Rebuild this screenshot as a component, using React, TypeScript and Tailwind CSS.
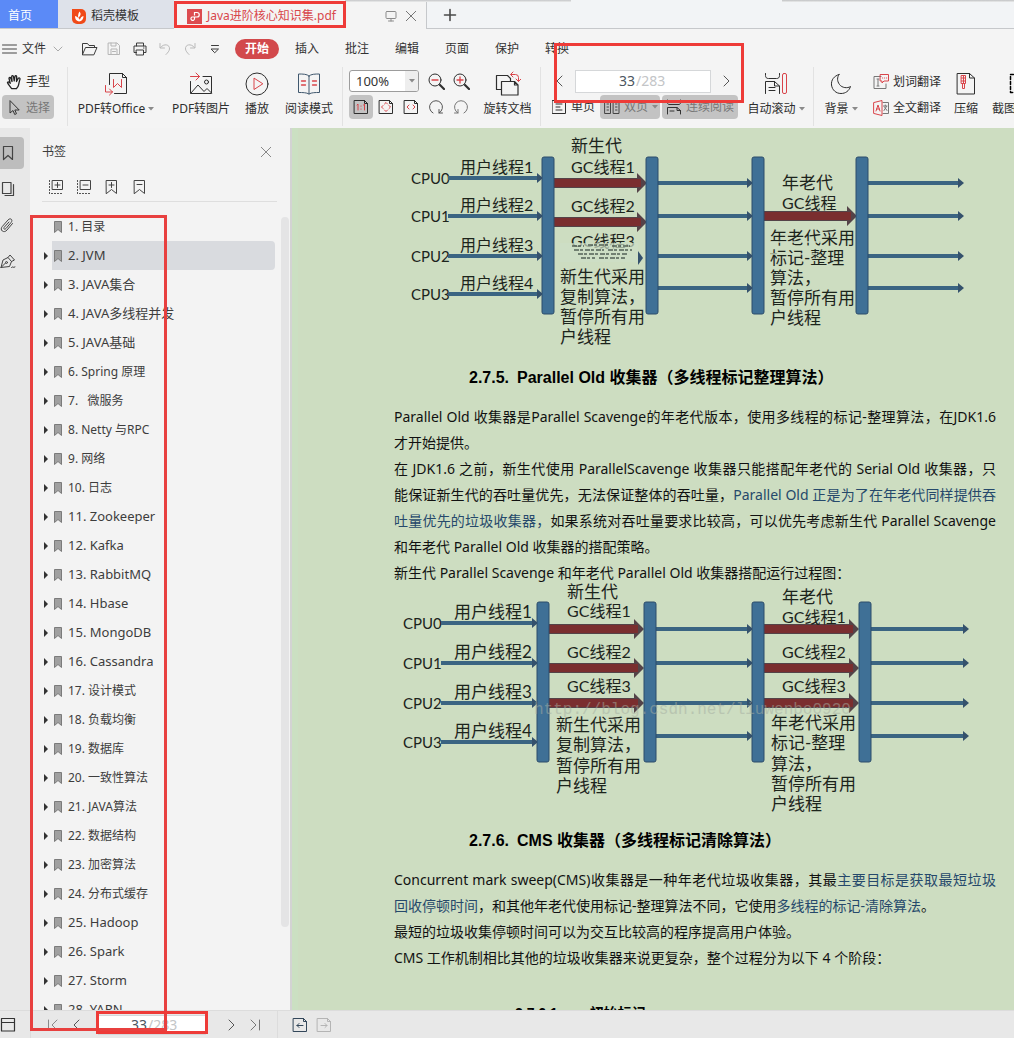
import React from "react";
import type { ReactNode } from "react";

const RED = "#d9444a";

function Svg({ w = 16, h = 16, className = "", children }: { w?: number; h?: number; className?: string; children: ReactNode }) {
  return (
    <svg
      width={w}
      height={h}
      viewBox={`0 0 ${w} ${h}`}
      fill="none"
      stroke="currentColor"
      strokeLinecap="round"
      strokeLinejoin="round"
      className={`shrink-0 ${className}`}
      aria-hidden="true"
    >
      {children}
    </svg>
  );
}

const ChevronLeft = ({ bar = false }: { bar?: boolean }) => (
  <Svg w={14} h={14}>
    <path d="M10 2 5 7l5 5" />
    {bar && <path d="M1.5 2v10" />}
  </Svg>
);
const ChevronRight = ({ bar = false }: { bar?: boolean }) => (
  <Svg w={14} h={14}>
    <path d="m4 2 5 5-5 5" />
    {bar && <path d="M12.500 2v10" />}
  </Svg>
);
const Close = ({ size = 12 }: { size?: number }) => (
  <svg width={size} height={size} viewBox="0 0 12 12" fill="none" stroke="currentColor" aria-hidden="true">
    <path d="m1 1 10 10M11 1 1 11" />
  </svg>
);
const Caret = () => (
  <svg width="6" height="4" viewBox="0 0 6 4" className="shrink-0" aria-hidden="true">
    <path d="M0 0h6L3 3.500z" fill="#8a8a8a" />
  </svg>
);

/* ---------- Title tabs ---------- */

function TitleTabs() {
  return (
    <div className="relative flex h-[29px] shrink-0 border-b border-[#c6c8cb] bg-[#f2f4f6]">
      <button className="h-7 w-[58px] bg-[#5b8af7] pt-1 pr-3 pl-2 text-left text-xs text-white">首页</button>
      <button className="flex h-7 w-[116px] items-center gap-[5px] bg-[#dee2ea] pt-1 pl-[14px] text-xs text-[#333]">
        <svg width="14" height="15" viewBox="0 0 14 15" aria-hidden="true">
          <path d="M0 0h9a5 5 0 0 1 5 5v5a5 5 0 0 1-5 5H5a5 5 0 0 1-5-5z" fill="#f04a18" />
          <path d="M7.500 2.500c2 2.500 1 4-1 6.500-.8-1.500-.5-4 1-6.500zM3 7c0 3 1 5 4 5.500 3-.3 4.500-2.500 4.500-5.500-2 .4-3 2-3.700 3.700C7 9 5 7.500 3 7z" fill="#fff" />
        </svg>
        稻壳模板
      </button>
      <div className="flex h-[29px] w-[253px] items-center border-r border-[#c6c8cb] bg-[#f4f4f4] pt-[3px] pl-[13px] text-xs text-[#d8474c]">
        <svg width="15" height="15" viewBox="0 0 15 15" fill="none" aria-hidden="true">
          <rect width="15" height="15" fill="#dc4c50" />
          <path d="M7.500 6.500v-3h2.500a2 2 0 0 1 0 4.500H5a1.800 1.800 0 1 0 2.500 2V8" stroke="#fff" strokeWidth="1.200" />
        </svg>
        <span className="ml-[5px] w-[173px] whitespace-nowrap">Java进阶核心知识集.pdf</span>
        <Svg w={12} h={12} className="ml-[5px] text-[#8b8b8b]">
          <rect x="1" y="1.500" width="10" height="7" rx="1" />
          <path d="M6 8.500v2.500M3.500 11h5" />
        </Svg>
        <button aria-label="关闭标签" className="ml-2 text-[#777]">
          <Close size={12} />
        </button>
      </div>
      <button aria-label="新建标签" className="ml-4 pt-[2px] text-[#4a4a4a]">
        <Svg w={14} h={14}>
          <path d="M7 1.500v11M1.500 7h11" strokeWidth="1.600" />
        </Svg>
      </button>
      <span className="absolute top-0 right-0 h-[2px] w-[232px] bg-gradient-to-b from-[#bfc0c2] to-[#eceded]" />
      <span className="absolute top-0 left-[345px] h-[2px] w-[226px] bg-gradient-to-b from-[#c4c5c7] to-[#eceded]" />
    </div>
  );
}

/* ---------- Menu row ---------- */

function MenuRow() {
  const tabs = ["插入", "批注", "编辑", "页面", "保护", "转换"];
  return (
    <nav className="flex h-[38px] shrink-0 items-center pt-px pl-[2px] text-xs text-[#333]">
      <button className="flex items-center">
        <Svg w={15} h={12} className="mr-[5px] text-[#444]">
          <path d="M.5 2h14M.5 6h14M.5 10h14" />
        </Svg>
        文件
        <Svg w={10} h={6} className="ml-[7px] text-[#aaa]">
          <path d="m1 1 4 4 4-4" />
        </Svg>
      </button>
      <div className="ml-[18px] flex items-center gap-[9px] text-[#3c3c3c]">
        <button aria-label="打开">
          <Svg w={17} h={16}>
            <path d="M1.500 13.500v-11h5l1.500 2h5.500v2M1.500 13.500l3-7h11.500l-3 7z" />
          </Svg>
        </button>
        <button aria-label="保存" className="text-[#b5b5b5]">
          <Svg w={14} h={16}>
            <path d="M1.500 2h8.500l2.500 2.500V13.500h-11zM4 2v3h5V2M4 13.500V8h6v5.500M5.500 10.500h3" />
          </Svg>
        </button>
        <button aria-label="打印" className="ml-[3px]">
          <Svg w={14} h={16}>
            <path d="M3.500 5V2h7v3M3.500 11.500h-2.500V5h12v6.500h-2.500M3.500 9h7v5h-7zM10.500 7h.5" />
          </Svg>
        </button>
        <button aria-label="撤销" className="ml-[2px] text-[#b9b9b9]">
          <Svg w={14} h={16}>
            <path d="M2 2.500v4.500h4.500M2.500 6.500C6 2 12 3.500 11.500 8c-.3 2-1.500 3.500-3.500 5.500" />
          </Svg>
        </button>
        <button aria-label="恢复" className="ml-[2px] text-[#b9b9b9]">
          <Svg w={14} h={16}>
            <path d="M12 2.500v4.500H7.500M11.500 6.500C8 2 2 3.500 2.500 8c.3 2 1.500 3.500 3.500 5.500" />
          </Svg>
        </button>
        <button aria-label="更多命令" className="ml-1">
          <Svg w={10} h={14}>
            <path d="M1.500 3.500h7M1.500 7h7L5 10.500z" />
          </Svg>
        </button>
      </div>
      <button className="ml-[15px] h-5 w-11 rounded-full bg-[#d2494c] font-bold text-white">开始</button>
      <div className="ml-4 flex gap-[26px]">
        {tabs.map((t) => (
          <button key={t} className="whitespace-nowrap">{t}</button>
        ))}
      </div>
    </nav>
  );
}

/* ---------- Ribbon ---------- */

function Tool({ label, width, caret = false, children }: { label: string; width: string; caret?: boolean; children: ReactNode }) {
  return (
    <button className={`flex shrink-0 flex-col items-center gap-1 whitespace-nowrap pt-1 ${width}`}>
      <span className="flex h-[26px] items-center">{children}</span>
      <span className="flex items-center gap-[3px] leading-4">
        {label}
        {caret && <Caret />}
      </span>
    </button>
  );
}

function PageBox({ className, id }: { className: string; id: string }) {
  return (
    <div className={`flex items-center border border-[#d5d7d9] bg-white text-sm ${className}`}>
      <label htmlFor={id} className="sr-only">页码</label>
      <input id={id} defaultValue="33" className="w-1/2 min-w-0 bg-transparent pr-px text-right text-[#4b5560] outline-none" />
      <span className="w-1/2 text-[#c3c5c7]">/283</span>
    </div>
  );
}

function Ribbon() {
  return (
    <div className="flex h-[61px] shrink-0 overflow-hidden pb-[2px] text-xs text-[#2e2e2e]">
      <div className="flex w-[67px] shrink-0 flex-col gap-[2px] pt-[2px] pl-[2px]">
        <button className="flex h-6 items-center gap-1 px-1 pt-px">
          <Svg w={16} h={18} className="text-[#222]">
            <path
              d="M5.500 15.500C4 13 2 11.500 1.500 9.500c.8-1 2-.3 2.800.8L3 5.500c0-1.300 1.500-1.300 1.800-.2L6 8.500 5.700 3.500c.2-1.300 1.600-1.200 1.800 0L8.200 8 9 3.500c.3-1.200 1.600-1 1.700.2L10.500 8.500l1.800-3.200c.8-.9 1.900-.2 1.700.8-.7 2-1 4-1.500 6-.3 1.500-1.300 2.500-2 3.500z"
              strokeWidth="1.300"
            />
          </Svg>
          手型
        </button>
        <button className="flex h-6 w-[52px] items-center gap-1 rounded bg-[#c3c3c3] px-1 pt-px text-[#777]">
          <Svg w={16} h={18} className="text-[#333]">
            <path d="M4 2v12l3-2.500 1.700 4 1.800-.8-1.700-3.700h4z" />
          </Svg>
          选择
        </button>
      </div>
      <div className="flex shrink-0 border-x border-[#e2e2e2]">
        <Tool label="PDF转Office" width="w-[96px]" caret>
          <Svg w={24} h={24}>
            <path d="M5.500 12.500V1.500h13l4 4v16h-12M18.500 1.500v4h4" />
            <path d="M9.500 7.500v8l4-4 4 4v-8M1.500 13.500v6.500h7M5.500 17l3 3-3 3" stroke={RED} />
          </Svg>
        </Tool>
        <Tool label="PDF转图片" width="w-[74px]">
          <Svg w={24} h={24}>
            <path d="M14 4.500h8.500v17h-21v-12M2 21l7-8 6 6.500 3-3 4.500 4.500" />
            <circle cx="17.500" cy="10" r="2" />
            <path d="M1.500 4.500h9M7 1l3.500 3.500L7 8" stroke={RED} />
          </Svg>
        </Tool>
        <Tool label="播放" width="w-[38px]">
          <Svg w={24} h={24}>
            <circle cx="12" cy="12" r="11" />
            <path d="M9 6.500v11l8.500-5.500z" stroke={RED} />
          </Svg>
        </Tool>
        <Tool label="阅读模式" width="w-[66px]">
          <Svg w={24} h={24} className="text-[#40586e]">
            <path d="M12 4C10 2 6 2 1.500 2v18.500c4 0 8 0 10.500 1.500 2.500-1.500 6.500-1.500 10.500-1.500V2C18 2 14 2 12 4zM12 4v18" />
            <path d="M4.500 9h4M4.500 13h4M15.500 9h4M15.500 13h4" stroke={RED} strokeWidth="1.300" />
          </Svg>
        </Tool>
      </div>
      <div className="flex w-[132px] shrink-0 flex-col gap-[2px] pt-[2px] pl-[6px]">
        <div className="flex h-6 items-center">
          <div className="relative h-[22px] w-[70px]">
            <select
              aria-label="缩放比例"
              className="h-[22px] w-full appearance-none rounded-[3px] border border-[#9c9c9c] bg-white pl-[6px] text-[13px] leading-5 text-[#333]"
            >
              <option>100%</option>
            </select>
            <span className="pointer-events-none absolute top-px right-px flex h-5 w-[13px] items-center justify-center rounded-r-[2px] bg-[#eee]">
              <Caret />
            </span>
          </div>
          <button aria-label="缩小" className="ml-2">
            <Svg w={18} h={18}>
              <circle cx="8" cy="8" r="6" />
              <path d="m13 13 4 4" strokeWidth="2.200" />
              <path d="M5 8h6" stroke={RED} strokeWidth="1.300" />
            </Svg>
          </button>
          <button aria-label="放大" className="ml-[7px]">
            <Svg w={18} h={18}>
              <circle cx="8" cy="8" r="6" />
              <path d="m13 13 4 4" strokeWidth="2.200" />
              <path d="M5 8h6M8 5v6" stroke={RED} strokeWidth="1.300" />
            </Svg>
          </button>
        </div>
        <div className="flex h-6 items-center">
          <button aria-label="实际大小" className="flex h-6 w-6 items-center justify-center rounded bg-[#c3c3c3]">
            <Svg w={16} h={16}>
              <path d="M1.500 1.500h10l3 3v10h-13zM11.500 1.500v3h3" />
              <path d="M4 6l1-1v6M10.500 6l1-1v6M8 7v.2M8 10v.2" stroke={RED} />
            </Svg>
          </button>
          <button aria-label="适合页面" className="ml-[5px]">
            <Svg w={16} h={16}>
              <path d="M1.500 1.500h10l3 3v10h-13zM11.500 1.500v3h3" />
              <path d="m6.500 5 1.500-1.500L9.500 5M6.500 11 8 12.500 9.500 11M5 6.500 3.500 8 5 9.500M11 6.500 12.500 8 11 9.500" stroke={RED} />
            </Svg>
          </button>
          <button aria-label="适合宽度" className="ml-[9px]">
            <Svg w={16} h={16}>
              <path d="M1.500 1.500h10l3 3v10h-13zM11.500 1.500v3h3" />
              <path d="M6 6 4 8l2 2M10 6l2 2-2 2" stroke={RED} />
            </Svg>
          </button>
          <button aria-label="向左旋转" className="ml-[9px] text-[#555]">
            <Svg w={16} h={16}>
              <path d="M5 14A6.500 6.500 0 1 1 11 14M11 10.500V14h3.500" />
            </Svg>
          </button>
          <button aria-label="向右旋转" className="ml-[9px] text-[#777]">
            <Svg w={16} h={16}>
              <path d="M11 14A6.500 6.500 0 1 0 5 14M5 10.500V14H1.500" />
            </Svg>
          </button>
        </div>
      </div>
      <Tool label="旋转文档" width="w-[65px]">
        <Svg w={26} h={26}>
          <path d="M6 18.500H1.500V4.500h11l3 3v2.500M6.500 10.500h13l3.500 3.500v10H6.500zM19.500 10.500v3.500H23" strokeWidth="1.200" />
          <path d="M16 3.500h4.500a3 3 0 0 1 3 3v3.500M18 1l-2.500 2.500L18 6M21 8l2.500 2.500L26 8" stroke={RED} />
        </Svg>
      </Tool>
      <div className="flex w-[199px] shrink-0 flex-col gap-[2px] border-l border-[#e2e2e2] pt-[2px] pl-[11px]">
        <div className="flex h-6 items-center text-[#555]">
          <button aria-label="上一页"><ChevronLeft /></button>
          <PageBox id="page-top" className="ml-[9px] h-[23px] w-[136px] pr-[14px]" />
          <button aria-label="下一页" className="ml-[9px]"><ChevronRight /></button>
        </div>
        <div className="flex h-6 items-center gap-[2px] whitespace-nowrap">
          <button className="flex items-center gap-[5px] pr-[3px]">
            <Svg w={14} h={16}>
              <path d="M.5 1.500h13v13H.5zM4 5h6M4 8h4M4 11h6" />
            </Svg>
            单页
          </button>
          <button className="flex h-6 w-[60px] items-center gap-1 rounded bg-[#c3c3c3] pl-1 text-[#777]">
            <Svg w={16} h={16} className="text-[#444]">
              <path d="M1 1.500h5.500v13H1zM9.500 1.500H15v13H9.500zM3 5h1.500M3 8h1.500M3 11h1.500M11.500 5H13M11.500 8H13M11.500 11H13" />
            </Svg>
            双页
            <Caret />
          </button>
          <button className="flex h-6 w-[76px] items-center gap-1 rounded bg-[#c3c3c3] pl-1 text-[#777]">
            <Svg w={16} h={16} className="text-[#333]">
              <path d="M1.500 1v2.500c0 1 .5 2 1.500 2h10c1 0 1.500-1 1.500-2V1M1.500 15V8.500H11l3.500 3V15M11 8.500v3h3.500M4 12h4" />
            </Svg>
            连续阅读
          </button>
        </div>
      </div>
      <Tool label="自动滚动" width="w-[74px]" caret>
        <Svg w={24} h={24}>
          <path d="M1.500 1.500v2c0 2 1 3 3 3h8c2 0 3-1 3-3v-2M1.500 21.500v-12h9l5 4.500v7.500M10.500 9.500V14h5M5 15.500h6M5 18.500h6" />
          <rect x="18.500" y="1.500" width="4" height="20" rx="1.500" stroke={RED} />
        </Svg>
      </Tool>
      <div className="flex min-w-0 flex-1 border-l border-[#e2e2e2]">
        <Tool label="背景" width="w-[54px]" caret>
          <Svg w={22} h={22}>
            <path d="M9 1.500C4 3 1 7 1.500 12c.7 5 4.500 8.500 9.500 8.500 4.500 0 8-2.500 9.500-7-3 2-8.500 1.500-11-2C7 8 7 4.500 9 1.500z" />
          </Svg>
        </Tool>
        <div className="flex w-[78px] shrink-0 flex-col gap-[2px] pt-[2px] pl-[5px] whitespace-nowrap">
          <button className="flex h-6 items-center gap-1 pt-px">
            <Svg w={16} h={16}>
              <path d="M8 2.500H1v12h12V10M5 5.500v6M4 5h2M4 12h2" stroke="#777" />
              <path d="M7.500.5h8v6.500H11L9 9V7H7.500zM9.500 4h.2M11.500 4h.2M13.500 4h.2" stroke={RED} />
            </Svg>
            划词翻译
          </button>
          <button className="flex h-6 items-center gap-1 pt-px">
            <Svg w={16} h={16}>
              <path d="M10 2.500h5.500v11H10M10.500 6H14M12.300 5v1M11 10.500l2.500-4M11.500 7l2.500 3.500" stroke="#777" />
              <path d="M1 2.500 9 .5v15L1 13.500zM3 11l2-6 2 6M3.700 9h2.600" stroke={RED} />
            </Svg>
            全文翻译
          </button>
        </div>
        <Tool label="压缩" width="w-[40px]">
          <Svg w={20} h={24}>
            <path d="M1.500 1.500h12l5 4.500v16h-17zM13.500 1.500V6h5" />
            <path d="M5.500 3.500h4v8h-4zM7.500 3.500v8M5.500 6h4M5.500 9h4M6.500 11.500v5h2v-5" stroke={RED} />
          </Svg>
        </Tool>
        <Tool label="截图对比" width="w-[60px]">
          <Svg w={14} h={24} className="text-black">
            <rect x="1.500" y="2.500" width="17" height="18" strokeWidth="1.500" strokeDasharray="3 2" />
          </Svg>
        </Tool>
      </div>
    </div>
  );
}

/* ---------- Bookmark panel ---------- */

const bookmarks: { no: number; name: string; large?: boolean }[] = [
  { no: 1, name: "目录" },
  { no: 2, name: "JVM", large: true },
  { no: 3, name: "JAVA集合", large: true },
  { no: 4, name: "JAVA多线程并发", large: true },
  { no: 5, name: "JAVA基础", large: true },
  { no: 6, name: "Spring 原理" },
  { no: 7, name: "\u00a0 微服务" },
  { no: 8, name: "Netty 与RPC" },
  { no: 9, name: "网络" },
  { no: 10, name: "日志" },
  { no: 11, name: "Zookeeper", large: true },
  { no: 12, name: "Kafka", large: true },
  { no: 13, name: "RabbitMQ", large: true },
  { no: 14, name: "Hbase", large: true },
  { no: 15, name: "MongoDB", large: true },
  { no: 16, name: "Cassandra", large: true },
  { no: 17, name: "设计模式" },
  { no: 18, name: "负载均衡" },
  { no: 19, name: "数据库" },
  { no: 20, name: "一致性算法" },
  { no: 21, name: "JAVA算法" },
  { no: 22, name: "数据结构" },
  { no: 23, name: "加密算法" },
  { no: 24, name: "分布式缓存" },
  { no: 25, name: "Hadoop", large: true },
  { no: 26, name: "Spark", large: true },
  { no: 27, name: "Storm", large: true },
  { no: 28, name: "YARN", large: true },
];

function Rail() {
  return (
    <div className="flex w-[30px] shrink-0 flex-col bg-[#e8e8e8] pt-[9px] text-[#444]">
      <button aria-label="书签" className="flex h-8 w-6 items-center rounded-r bg-[#bdbdbd] pl-[2px]">
        <Svg w={12} h={16}>
          <path d="M1.500 1.500h9v13L6 10.500l-4.500 4z" strokeWidth="1.200" />
        </Svg>
      </button>
      <button aria-label="缩略图" className="mt-[2px] flex h-9 items-center pl-[1px]">
        <Svg w={14} h={16}>
          <path d="M1.500 1.500h8.500v11H1.500zM12.500 3.500v11H4" strokeWidth="1.200" />
        </Svg>
      </button>
      <button aria-label="附件" className="flex h-9 items-center">
        <Svg w={14} h={16}>
          <path d="M12.500 6.500 7 13c-1.500 1.800-3.300 2-4.700 1-1.500-1.200-1.300-3 0-4.500L8 3c2.300-2.600 5.200-.3 3.200 2.300L6 11.500c-1.500 1.500-3 .2-1.700-1.300L9 5" />
        </Svg>
      </button>
      <button aria-label="签名" className="flex h-9 items-center">
        <Svg w={16} h={16}>
          <path d="M1 14.500 3 7l5-2.500 3.500 4-2 5-8.500 1M8 4.500 10 2l4.500 5-3 1.500M1.500 14l4-4M11.500 14.500c1-2 1.500 1 3.500-.5" />
          <circle cx="6.500" cy="9.500" r="1" />
        </Svg>
      </button>
    </div>
  );
}

function BookmarkPanel() {
  return (
    <aside className="flex w-[262px] shrink-0 flex-col border-r-2 border-[#d3d3d3] bg-[#f3f3f3] text-xs text-[#3d3d3d]">
      <div className="flex h-12 shrink-0 items-center justify-between pr-[18px] pl-3">
        <h2>书签</h2>
        <button aria-label="关闭书签" className="text-[#888]"><Close size={12} /></button>
      </div>
      <div className="mr-[13px] ml-3 flex h-[26px] shrink-0 items-start gap-3 border-b border-[#dedede] pt-[3px] pl-[6px] text-[#444]">
        <button aria-label="展开全部">
          <Svg w={16} h={16}>
            <path d="M4.500 1.500h10v9h-10zM7 6h5M9.500 3.500v5" />
            <path d="M1.500 1.500v13M3.500 14.500h10" strokeDasharray="1 2" />
          </Svg>
        </button>
        <button aria-label="折叠全部">
          <Svg w={16} h={16}>
            <path d="M4.500 1.500h10v9h-10zM7 6h5" />
            <path d="M1.500 1.500v13M3.500 14.500h10" strokeDasharray="1 2" />
          </Svg>
        </button>
        <button aria-label="添加书签">
          <Svg w={16} h={16}>
            <path d="M2.500 1.500h10v13l-5-4-5 4zM5 6h5M7.500 3.500v5" />
          </Svg>
        </button>
        <button aria-label="删除书签">
          <Svg w={16} h={16}>
            <path d="M2.500 1.500h10v13l-5-4-5 4zM5 5.500h5" />
          </Svg>
        </button>
      </div>
      <div className="flex min-h-0 flex-1 overflow-hidden">
        <ul className="flex-1 pt-[10px] pl-3">
          {bookmarks.map((b) => (
            <li key={b.no} className="flex h-[29px] items-center">
              <span className="flex w-[10px] shrink-0 justify-start">
                {b.no > 1 && (
                  <svg width="6" height="8" viewBox="0 0 6 8" className="ml-px" aria-hidden="true">
                    <path d="M1 0v8l4-4z" fill="#333" />
                  </svg>
                )}
              </span>
              <button
                className={`flex h-[29px] flex-1 items-center rounded-r-sm pl-[2px] text-left whitespace-nowrap ${b.no === 2 ? "bg-[#d9dbdf]" : ""}`}
              >
                <svg width="8" height="12" viewBox="0 0 8 12" className="mr-[6px]" aria-hidden="true">
                  <path d="M.5.5h7v11L4 8.500.5 11.500z" fill="#a0a0a0" stroke="#7b7b7b" />
                </svg>
                <span className={b.large ? "text-[13px]" : "text-xs"}>
                  {b.no}. {b.name}
                </span>
              </button>
            </li>
          ))}
        </ul>
        <div className="ml-[6px] w-[9px] pr-px">
          <div className="mt-[15px] h-[710px] rounded bg-[#e4e4e5]" />
        </div>
      </div>
    </aside>
  );
}

/* ---------- Diagrams ---------- */

const Bar = ({ x, y, h }: { x: number; y: number; h: number }) => (
  <rect x={x} y={y} width="12" height={h} rx="2" fill="#3f7096" stroke="#2c4c6a" />
);
const Thin = ({ x1, x2, y }: { x1: number; x2: number; y: number }) => (
  <g>
    <path d={`M${x1} ${y}H${x2 - 3}`} stroke="#3a6482" strokeWidth="4" />
    <path d={`M${x2 - 5} ${y - 5}v10l6-5z`} fill="#34516c" />
  </g>
);
const Thick = ({ x1, x2, y }: { x1: number; x2: number; y: number }) => (
  <g>
    <path d={`M${x1} ${y - 5}H${x2 - 9}v-5l10 10-10 10v-5H${x1}z`} fill="#544348" />
    <path d={`M${x1} ${y - 4}H${x2 - 5}v8H${x1}z`} fill="#7a2e2f" />
  </g>
);
const Lines = ({ x, ys, lines }: { x: number; ys: number[]; lines: string[] }) => (
  <>
    {lines.map((t, i) => (
      <text key={t} x={x} y={ys[i]} className="text-[17px]">{t}</text>
    ))}
  </>
);

const diagramFont = "block h-auto w-full overflow-visible fill-[#1c241c] font-[Lato,'Noto_Sans_CJK_SC',sans-serif]";

function SerialDiagram() {
  const cpu = [178, 216, 256, 294];
  const flow = [183, 216, 256, 288];
  return (
    <svg viewBox="0 128 602 236" className={diagramFont} role="img" aria-label="新生代与年老代收集线程">
      {cpu.map((y, i) => (
        <g key={y}>
          <text x="17" y={y + 6} className="text-[15px]">CPU{i}</text>
          <Thin x1={54} x2={148} y={y} />
          <text x="66" y={y - 5} className="text-[16px]">用户线程{i + 1}</text>
        </g>
      ))}
      {flow.map((y) => (
        <g key={y}>
          <Thin x1={264} x2={358} y={y} />
          <Thin x1={474} x2={569} y={y} />
        </g>
      ))}
      <text x="177" y="152" className="text-[17px]">新生代</text>
      <text x="177" y="173" className="text-[16px]">GC线程1</text>
      <text x="177" y="212" className="text-[16px]">GC线程2</text>
      <text x="177" y="247" className="text-[16px]">GC线程3</text>
      <Thick x1={160} x2={252} y={183} />
      <Thick x1={160} x2={252} y={222} />
      <rect x="166" y="243" width="78" height="19" fill="#cddec6" opacity=".7" />
      <path
        d="M178 246h12M194 245h20M218 246h18M180 250h30M214 250h24M184 254h50M187 258h14M205 258h26"
        stroke="#35423c"
        strokeWidth="2"
        strokeDasharray="5 1 3 2"
        opacity=".6"
      />
      <path d="M244 251v14l5-7z" fill="#34516c" />
      <text x="388" y="189" className="text-[17px]">年老代</text>
      <text x="388" y="209" className="text-[16px]">GC线程</text>
      <Thick x1={370} x2={462} y={216} />
      <Lines x={166} ys={[283, 303, 323, 343]} lines={["新生代采用", "复制算法，", "暂停所有用", "户线程"]} />
      <Lines x={376} ys={[244, 264, 284, 304, 324]} lines={["年老代采用", "标记-整理", "算法，", "暂停所有用", "户线程"]} />
      <path d="M377 242h50M377 254h46" stroke="#cddec6" strokeWidth="2" opacity=".7" />
      {[148, 252, 358, 462].map((x) => (
        <Bar key={x} x={x} y={157} h={157} />
      ))}
    </svg>
  );
}

function ParallelDiagram() {
  const cpu = [623, 663, 703, 742];
  const flow = [629, 663, 703, 736];
  const gc = [629, 668, 703];
  const labels = [617, 658, 692];
  return (
    <svg viewBox="0 586 602 232" className={diagramFont} role="img" aria-label="Parallel Scavenge 与 Parallel Old 搭配运行过程">
      {cpu.map((y, i) => (
        <g key={y}>
          <text x="9" y={y + 6} className="text-[15px]">CPU{i}</text>
          <Thin x1={47} x2={143} y={y} />
          <text x="60" y={y - 5} className="text-[17px]">用户线程{i + 1}</text>
        </g>
      ))}
      {flow.map((y) => (
        <g key={y}>
          <Thin x1={262} x2={358} y={y} />
          <Thin x1={477} x2={574} y={y} />
        </g>
      ))}
      <text x="173" y="598" className="text-[17px]">新生代</text>
      <text x="388" y="603" className="text-[17px]">年老代</text>
      {gc.map((y, i) => (
        <g key={y}>
          <Thick x1={155} x2={249} y={y} />
          <Thick x1={370} x2={464} y={y} />
          <text x="173" y={labels[i]} className="text-[16px]">GC线程{i + 1}</text>
          <text x="388" y={i === 0 ? 623 : labels[i]} className="text-[16px]">GC线程{i + 1}</text>
        </g>
      ))}
      {[143, 250, 358, 465].map((x) => (
        <Bar key={x} x={x} y={602} h={160} />
      ))}
      <text x="140" y="714" className="fill-[#a5aea2] font-['Liberation_Mono',monospace] text-[16px] opacity-50">
        http://blog.csdn.net/liuwenbo0920
      </text>
      <Lines x={162} ys={[731, 751, 772, 792]} lines={["新生代采用", "复制算法，", "暂停所有用", "户线程"]} />
      <Lines x={377} ys={[729, 749, 770, 790, 810]} lines={["年老代采用", "标记-整理", "算法，", "暂停所有用", "户线程"]} />
    </svg>
  );
}

/* ---------- Document ---------- */

function Line({ full = false, children }: { full?: boolean; children: ReactNode }) {
  return <span className={`block whitespace-nowrap ${full ? "text-justify [text-align-last:justify]" : ""}`}>{children}</span>;
}
const Blue = ({ children }: { children: ReactNode }) => <span className="text-[#26496b]">{children}</span>;

function Heading({ no, children }: { no: string; children: ReactNode }) {
  return (
    <h3 className="flex gap-2 pl-[75px] font-['Liberation_Sans','Noto_Sans_CJK_SC',sans-serif] text-base leading-7 font-bold whitespace-nowrap text-black">
      <span>{no}</span>
      <span>{children}</span>
    </h3>
  );
}

function DocumentPage() {
  return (
    <main className="min-w-0 flex-1 overflow-hidden border-l-[6px] border-[#cbe0c2] bg-[#cdddc1] pr-[18px] pl-24 text-sm leading-[26px] text-[#111]">
      <SerialDiagram />
      <Heading no="2.7.5.">Parallel Old 收集器（多线程标记整理算法）</Heading>
      <p className="mt-3">
        <Line full>Parallel Old 收集器是Parallel Scavenge的年老代版本，使用多线程的标记-整理算法，在JDK1.6</Line>
        <Line>才开始提供。</Line>
      </p>
      <p>
        <Line full>在 JDK1.6 之前，新生代使用 ParallelScavenge 收集器只能搭配年老代的 Serial Old 收集器，只</Line>
        <Line full>能保证新生代的吞吐量优先，无法保证整体的吞吐量，<Blue>Parallel Old 正是为了在年老代同样提供吞</Blue></Line>
        <Line full><Blue>吐量优先的垃圾收集器，</Blue>如果系统对吞吐量要求比较高，可以优先考虑新生代 Parallel Scavenge</Line>
        <Line>和年老代 Parallel Old 收集器的搭配策略。</Line>
      </p>
      <p>
        <Line>新生代 Parallel Scavenge 和年老代 Parallel Old 收集器搭配运行过程图：</Line>
      </p>
      <ParallelDiagram />
      <div className="mt-[9px]">
        <Heading no="2.7.6.">CMS 收集器（多线程标记清除算法）</Heading>
      </div>
      <p className="mt-3">
        <Line full>Concurrent mark sweep(CMS)收集器是一种年老代垃圾收集器，其最<Blue>主要目标是获取最短垃圾</Blue></Line>
        <Line><Blue>回收停顿时间</Blue>，和其他年老代使用标记-整理算法不同，它使用<Blue>多线程的标记-清除算法</Blue>。</Line>
      </p>
      <p>最短的垃圾收集停顿时间可以为交互比较高的程序提高用户体验。</p>
      <p>CMS 工作机制相比其他的垃圾收集器来说更复杂，整个过程分为以下 4 个阶段：</p>
      <h4 className="mt-[29px] flex gap-7 pl-[121px] font-['Liberation_Sans','Noto_Sans_CJK_SC',sans-serif] font-bold text-black">
        <span>2.7.6.1.</span>
        <span>初始标记</span>
      </h4>
    </main>
  );
}

/* ---------- Status bar ---------- */

function StatusBar() {
  return (
    <footer className="flex h-7 shrink-0 items-center border-t border-[#dcdcdc] bg-[#e8e8e8] text-[#555]">
      <div className="flex h-full w-[31px] items-center border-r border-[#dcdcdc]">
        <button aria-label="侧栏">
          <Svg w={16} h={16} className="text-[#333]">
            <path d="M1.500 1.500h13v12.500h-13zM1.500 5.500h13" strokeWidth="1.200" />
          </Svg>
        </button>
      </div>
      <button aria-label="第一页" className="ml-4 text-[#8a8a8a]"><ChevronLeft bar /></button>
      <button aria-label="上一页" className="ml-2"><ChevronLeft /></button>
      <PageBox id="page-bottom" className="ml-[15px] h-5 w-[108px] pr-2" />
      <button aria-label="下一页" className="ml-[19px]"><ChevronRight /></button>
      <button aria-label="最后一页" className="ml-2 text-[#777]"><ChevronRight bar /></button>
      <div className="ml-4 flex h-full items-center gap-2 border-l border-[#dcdcdc] pl-[14px]">
        <button aria-label="后退视图" className="text-[#33475a]">
          <Svg w={16} h={16}>
            <path d="M1.500 1.500h10l3 3v10h-13zM11.500 1.500v3h3M11 8.500H5M7 6.500l-2 2 2 2" />
          </Svg>
        </button>
        <button aria-label="前进视图" className="text-[#b4b4b4]">
          <Svg w={16} h={16}>
            <path d="M1.500 1.500h10l3 3v10h-13zM11.500 1.500v3h3M5 8.500h6M9 6.500l2 2-2 2" />
          </Svg>
        </button>
      </div>
    </footer>
  );
}

export default function App() {
  return (
    <div className="relative flex h-screen flex-col overflow-hidden bg-[#f4f4f4] font-['Noto_Sans','Noto_Sans_CJK_SC',sans-serif]">
      <TitleTabs />
      <MenuRow />
      <Ribbon />
      <div className="flex min-h-0 flex-1">
        <Rail />
        <BookmarkPanel />
        <DocumentPage />
      </div>
      <StatusBar />
      <div className="pointer-events-none absolute top-px left-[174px] h-[27px] w-[172px] border-[3px] border-[#ee3b38]" />
      <div className="pointer-events-none absolute top-[43px] left-[554px] h-[60px] w-[190px] border-[3px] border-[#ee3b38]" />
      <div className="pointer-events-none absolute top-[215px] bottom-[7px] left-[30px] w-[137px] border-[3px] border-[#e8403f]" />
      <div className="pointer-events-none absolute bottom-[4px] left-[96px] h-[23px] w-[112px] border-[3px] border-[#ee3b38]" />
    </div>
  );
}
